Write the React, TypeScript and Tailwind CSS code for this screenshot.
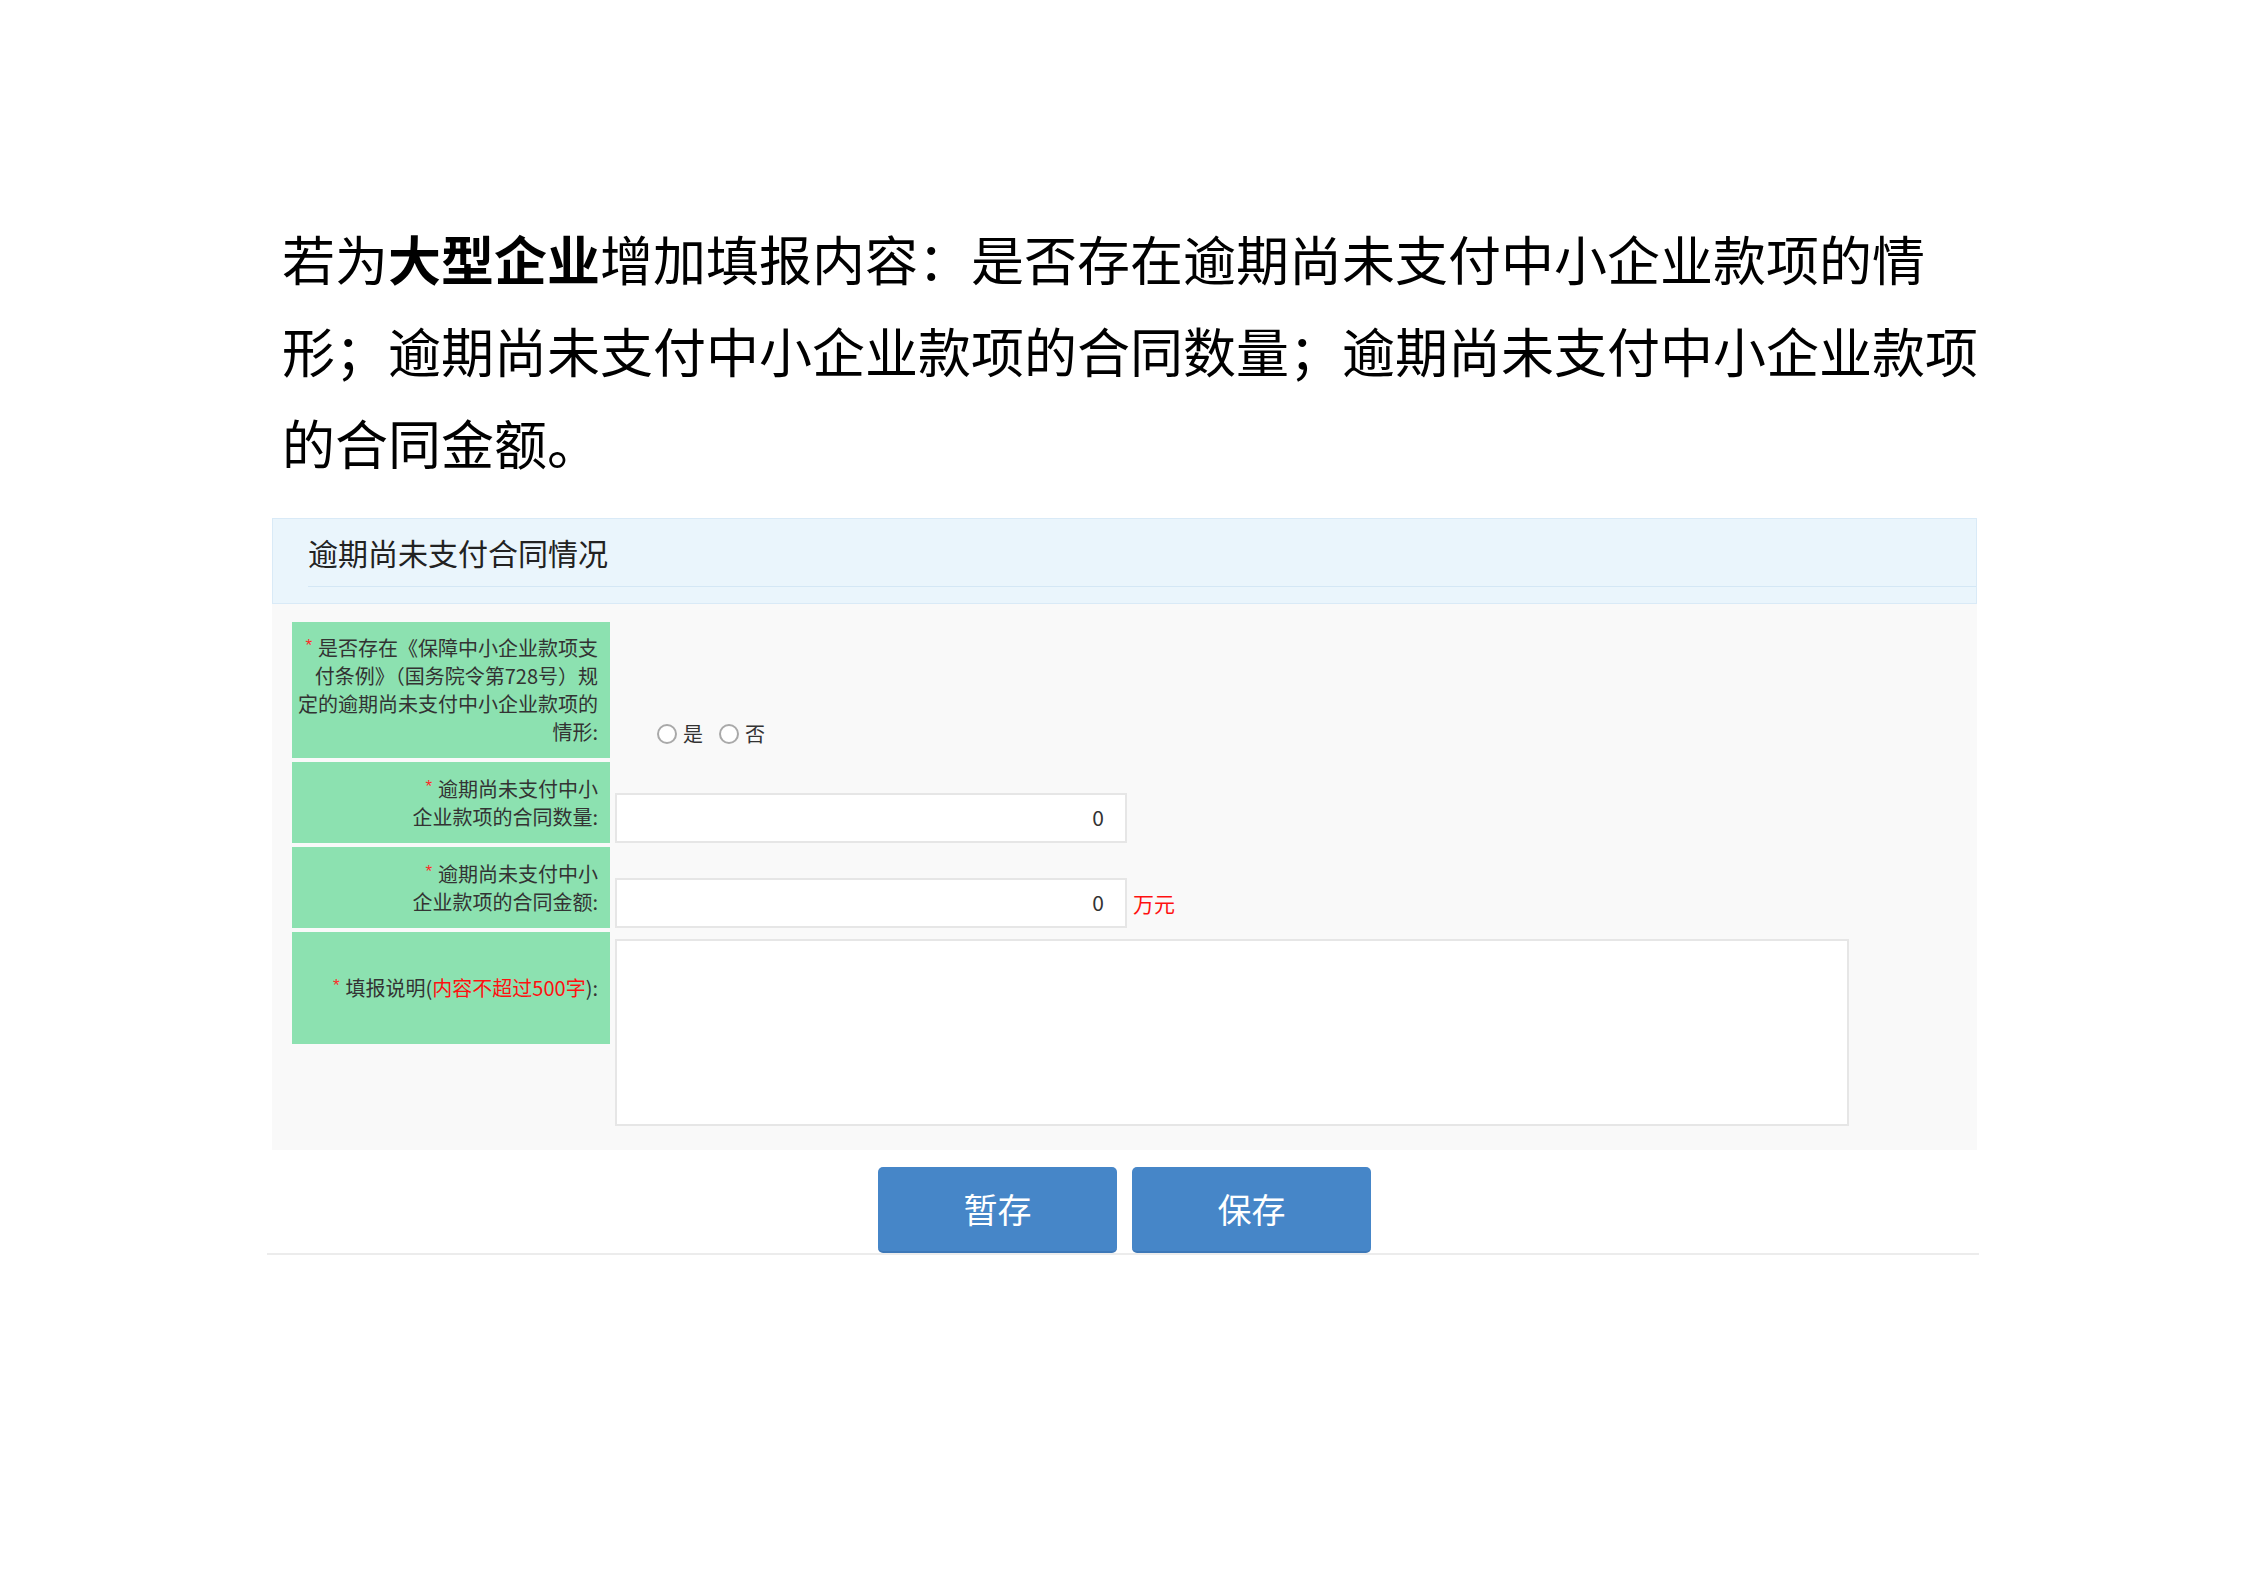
import React from "react";

const CJK = { fontFamily: '"Noto Sans CJK SC", "Noto Sans", sans-serif' };

function Star() {
  return (
    <span
      className="text-[#ff2a2a] text-[17px] leading-[17px] align-top relative top-[3px] mr-[6px]"
      style={{ fontFamily: '"Liberation Sans", sans-serif' }}
    >
      *
    </span>
  );
}

function Radio({ label }: { label: string }) {
  return (
    <div className="flex items-center">
      <span className="w-[20px] h-[20px] rounded-full border-2 border-[#a9a9a9] bg-white" />
      <span className="ml-[6px] text-[20px] leading-[24px] text-[#333]">{label}</span>
    </div>
  );
}

function Field({ value }: { value: string }) {
  return (
    <div className="w-[512px] h-[50px] ml-[5px] bg-white border-2 border-[#e6e6e6] flex items-center justify-end pr-[21px] text-[21px] text-[#333]">
      {value}
    </div>
  );
}

export default function App() {
  return (
    <div className="min-h-screen bg-white" style={CJK}>
      <div className="pt-[212px] ml-[267px] w-[1712px]">
        <div className="pl-[15px] text-[53px] leading-[92px] text-black whitespace-nowrap">
          若为<span className="font-bold">大型企业</span>增加填报内容：是否存在逾期尚未支付中小企业款项的情
          <br />
          形；逾期尚未支付中小企业款项的合同数量；逾期尚未支付中小企业款项
          <br />
          的合同金额。
        </div>

        <div className="ml-[5px] mr-[2px] mt-[30px]">
          <div className="h-[86px] bg-[#eaf5fc] border border-[#d9eaf7] pl-[35px] pt-[13px]">
            <div className="text-[30px] leading-[40px] text-[#222] pb-[14px] border-b border-[#d4e7f5]">
              逾期尚未支付合同情况
            </div>
          </div>

          <div className="bg-[#f9f9f9] pt-[18px] pb-[24px] pl-[20px] flex flex-col gap-[4px]">
            <div className="flex items-start">
              <div className="w-[318px] h-[136px] bg-[#8ce1b0] flex items-center justify-end pr-[12px] pl-[2px] text-right text-[20px] leading-[28px] text-[#333] whitespace-nowrap">
                <div>
                  <Star />是否存在《保障中小企业款项支
                  <br />
                  付条例》（国务院令第728号）规
                  <br />
                  定的逾期尚未支付中小企业款项的
                  <br />
                  情形:
                </div>
              </div>
              <div className="ml-[5px] pl-[42px] pt-[100px] flex items-center gap-[16px]">
                <Radio label="是" />
                <Radio label="否" />
              </div>
            </div>

            <div className="flex items-end">
              <div className="w-[318px] h-[81px] bg-[#8ce1b0] flex items-center justify-end pr-[12px] text-right text-[20px] leading-[28px] text-[#333]">
                <div>
                  <Star />逾期尚未支付中小
                  <br />
                  企业款项的合同数量:
                </div>
              </div>
              <Field value="0" />
            </div>

            <div className="flex items-end">
              <div className="w-[318px] h-[81px] bg-[#8ce1b0] flex items-center justify-end pr-[12px] text-right text-[20px] leading-[28px] text-[#333]">
                <div>
                  <Star />逾期尚未支付中小
                  <br />
                  企业款项的合同金额:
                </div>
              </div>
              <Field value="0" />
              <span className="ml-[6px] mb-[11px] text-[21px] leading-[28px] text-[#ff1010]">万元</span>
            </div>

            <div className="flex items-start">
              <div className="w-[318px] h-[112px] bg-[#8ce1b0] flex items-center justify-end pr-[12px] text-right text-[20px] leading-[28px] text-[#333] whitespace-nowrap">
                <div>
                  <Star />填报说明(<span className="text-[#ff1010]">内容不超过500字</span>):
                </div>
              </div>
              <div className="ml-[5px] mt-[7px] w-[1234px] h-[187px] bg-white border-2 border-[#e6e6e6]" />
            </div>
          </div>
        </div>

        <div className="flex justify-center gap-[15px] mt-[17px] pl-[3px]">
          <button className="w-[239px] h-[86px] rounded-[5px] bg-[#4686c8] border-b-2 border-[#3d78b8] text-white text-[34px] leading-[40px]">
            暂存
          </button>
          <button className="w-[239px] h-[86px] rounded-[5px] bg-[#4686c8] border-b-2 border-[#3d78b8] text-white text-[34px] leading-[40px]">
            保存
          </button>
        </div>
        <div className="h-[2px] bg-[#ececec]" />
      </div>
    </div>
  );
}
